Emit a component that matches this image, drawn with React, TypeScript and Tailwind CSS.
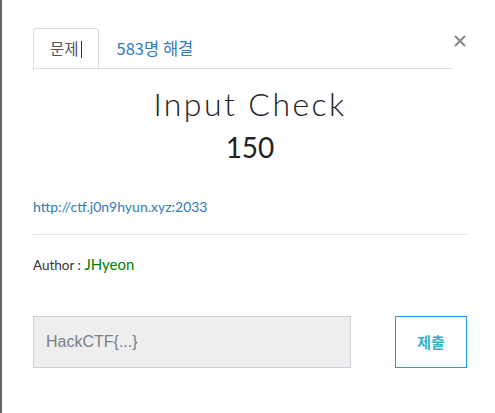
const App = () => {
  return (
    <div className="w-[495px] h-[413px] bg-white border-l-2 border-[#666] pt-[28px] pl-[31px] pr-[28px] font-['Lato','Noto_Sans_CJK_KR',sans-serif] text-[#333]">
      <div className="flex items-start">
        <ul className="flex flex-1 h-[41px] border-b border-[#ddd]">
          <li className="h-[42px] -mb-px border border-[#ddd] border-b-white rounded-t-[4px] pl-[16px] pr-[16px] flex items-center text-[15.5px] text-[#555] font-['Noto_Sans_CJK_KR',sans-serif]">
            문제<span className="inline-block w-px h-[17px] bg-[#333] ml-[2px]"></span>
          </li>
          <li className="ml-[2px] h-[41px] px-[16px] flex items-center text-[16.5px] text-[#337ab7] font-['Noto_Sans_CJK_KR',sans-serif]">
            583명 해결
          </li>
        </ul>
        <button className="w-[14px] h-[14px] mt-[6px] flex items-center justify-center">
          <svg width="12" height="12" viewBox="0 0 12 12">
            <path d="M1 1L11 11M11 1L1 11" stroke="#888" strokeWidth="2" />
          </svg>
        </button>
      </div>

      <div className="text-center">
        <h4 className="mt-[17px] text-[32px] leading-[36px] font-light tracking-[2.4px] text-[#222]">Input Check</h4>
        <h3 className="mt-[7px] text-[28px] leading-[36px] text-[#222]">150</h3>
      </div>

      <div className="mt-[32px] text-[14px] leading-[20px]">
        <a className="text-[#337ab7]">http://ctf.j0n9hyun.xyz:2033</a>
      </div>

      <hr className="mt-[17px] border-t border-[#e5e5e5]" />

      <p className="mt-[19px] text-[13.5px] leading-[20px]">
        Author : <span className="text-[15px] text-[#008000]">JHyeon</span>
      </p>

      <div className="mt-[41px] flex justify-between items-start">
        <input
          className="w-[318px] h-[52px] bg-[#eee] border border-[#ccd0d8] pl-[12px] text-[16px] font-['Liberation_Sans',sans-serif] placeholder:text-[#7a7f87] outline-none"
          placeholder="HackCTF{...}"
        />
        <button className="w-[72px] h-[52px] border border-[#2196f3] text-[15px] font-bold text-[#3ab0c8] font-['Noto_Sans_CJK_KR',sans-serif]">
          제출
        </button>
      </div>
    </div>
  );
};

export default App;
